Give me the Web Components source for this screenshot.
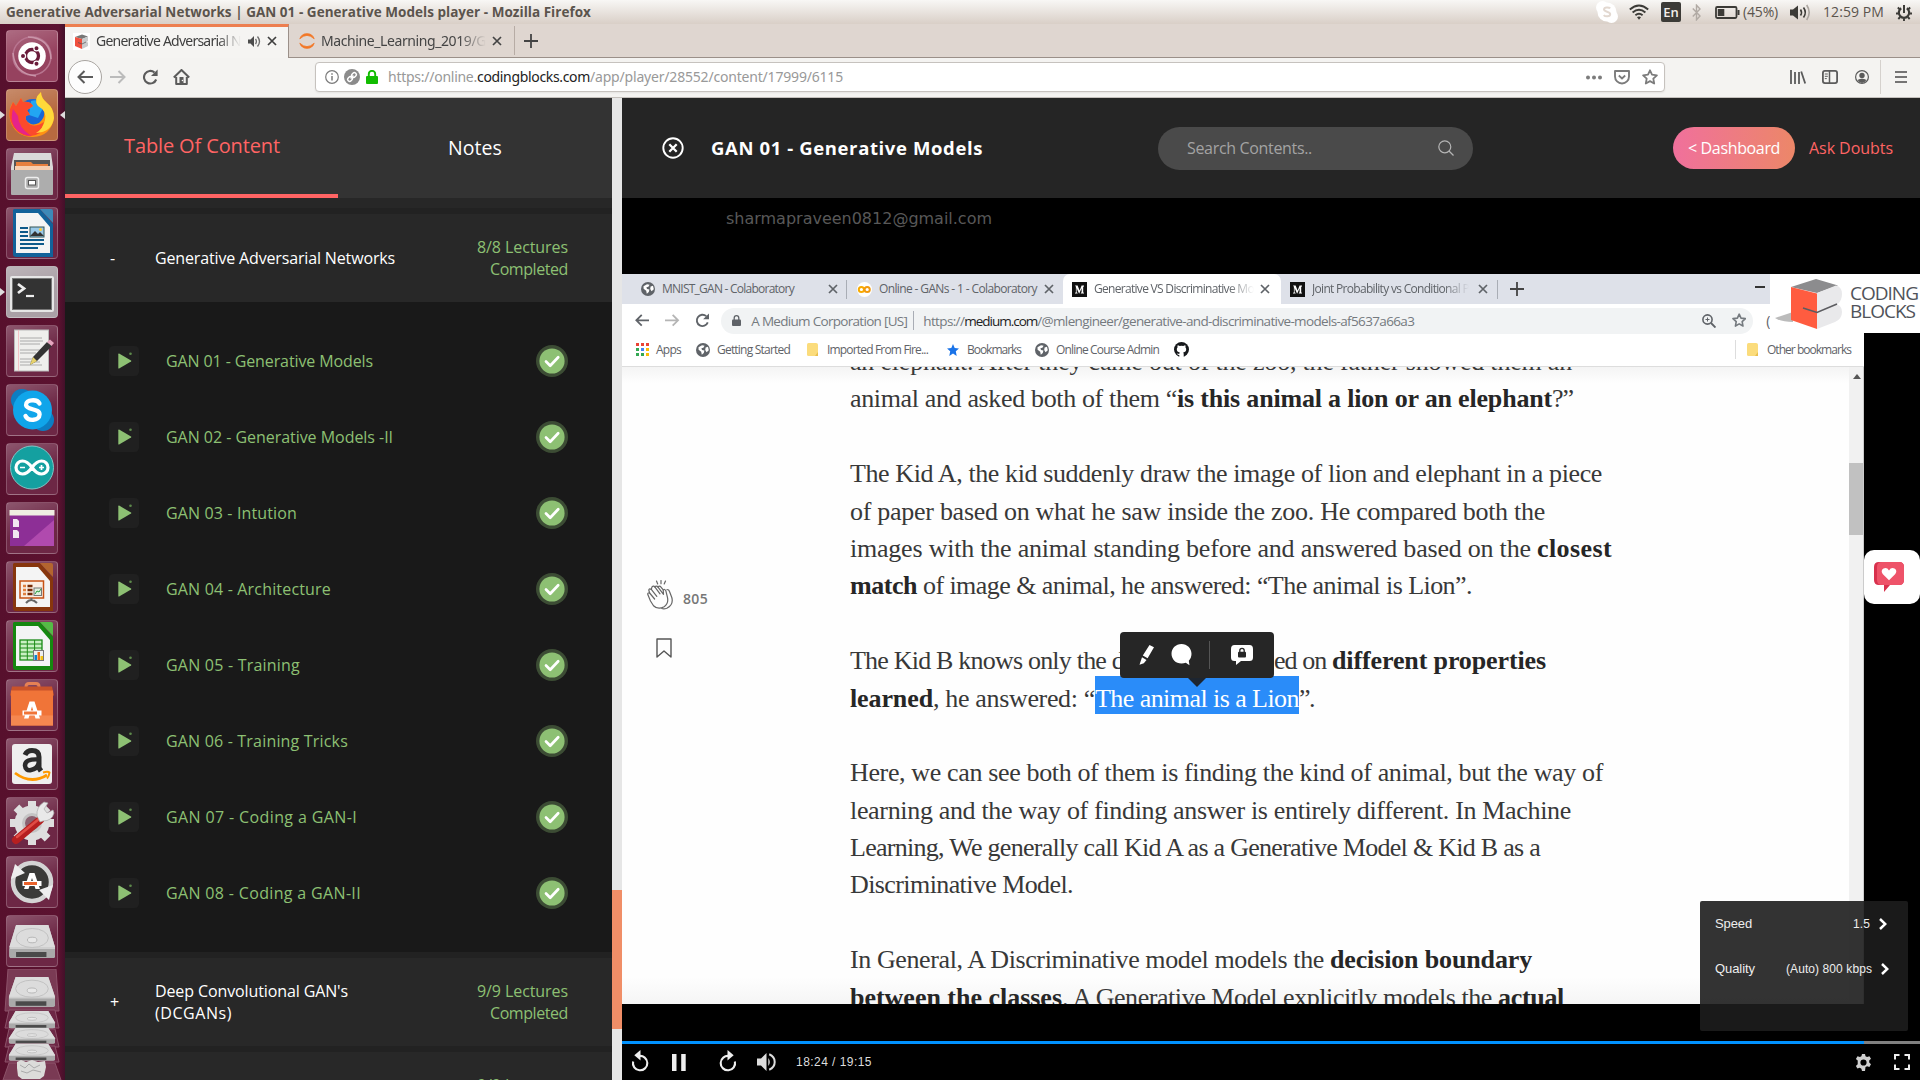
<!DOCTYPE html>
<html lang="en">
<head>
<meta charset="utf-8">
<title>GAN 01 - Generative Models player</title>
<style>
html,body{margin:0;padding:0;background:#000;overflow:hidden}
body{width:1920px;height:1080px;font-family:"Open Sans",sans-serif}
</style>
</head>
<body>
<desktop-shell></desktop-shell>
<script>
const define=(name,html)=>customElements.define(name,class extends HTMLElement{
  constructor(){super();this.attachShadow({mode:'open'}).innerHTML=html;}
});

/* ---------- icon set: name -> [width, height, markup] ---------- */
const globe='<circle cx="7" cy="7" r="7" fill="#5f6368"/><path d="M2.5 4.2 6 2.3l2.6.4-1.2 2-2 .6.6 1.6 2.4.6-.6 2.4-2 1.8-.6-3-2.6-2zM9.6 4.5l2.4-.8.8 3.6-2.2 2-1.4-2.4z" fill="#fff"/>';
const medium='<rect width="15" height="15" fill="#111"/><path d="M3 3.500h2.600l2 5 2-5H12v.8l-.8.6v5.400l.8.6v.7H8.800v-.7l.8-.6V6.200L7.300 11.600H7L4.600 6v4.200l1 .9v.5H3v-.5l.9-.9V4.800z" fill="#fff"/>';
const folder='<path d="M0 1.500Q0 0 1.500 0H9Q11 0 11 1.500V13H1.500Q0 13 0 11.500z" fill="#fbdc7c"/><path d="M11 9v4H8z" fill="#e9bf4f"/>';
const X='<path d="M1 1 9 9M9 1 1 9" stroke="currentColor" stroke-width="1.700" fill="none"/>';
const ICONS={
 skypeTray:[22,22,'<circle cx="11" cy="11" r="9.500" fill="#fff"/><circle cx="6.500" cy="6.500" r="6.500" fill="#fff"/><circle cx="15.500" cy="15.500" r="6.500" fill="#fff"/><path d="M14.200 7.400C13 6 8.200 5.900 8 8.300c-.1 3 6.300 1.800 6.200 4.900-.2 2.700-5 2.600-6.500.9" stroke="#e2d8d0" stroke-width="2" fill="none"/>'],
 wifi:[20,16,'<g fill="none" stroke="#3c3b37" stroke-width="1.900"><path d="M.8 5.500Q10-2.500 19.200 5.500"/><path d="M3.600 8.500Q10 3 16.400 8.500"/><path d="M6.400 11.300Q10 8.400 13.600 11.300"/></g><path d="M8 13.300Q10 11.800 12 13.300L10 15.800z" fill="#3c3b37"/>'],
 bt:[9,17,'<path d="M.8 4.500 8 12 4.500 15.800V1.200L8 5 .8 12.500" fill="none" stroke="#b1aaa4" stroke-width="1.400"/>'],
 battery:[25,13,'<rect x="1" y="1" width="20.500" height="11" rx="1.200" fill="none" stroke="#3c3b37" stroke-width="1.800"/><rect x="2.800" y="3" width="6.500" height="7" fill="#3c3b37"/><path d="M23.500 4v5" stroke="#3c3b37" stroke-width="2"/>'],
 vol:[21,17,'<path d="M0 5.500h3L8 1.500v14L3 11.500H0z" fill="#3c3b37"/><g fill="none" stroke-width="1.600"><path d="M10.500 5.500q2 3 0 6" stroke="#3c3b37"/><path d="M13.500 3.500q3.600 5 0 10" stroke="#3c3b37"/><path d="M16.700 1q5 7.500 0 15" stroke="#aaa49e"/></g>'],
 session:[16,17,'<g fill="none" stroke="#3c3b37"><path d="M5.200 4.300A5.200 5.200 0 1 0 10.800 4.300" stroke-width="2.200"/><path d="M8 1v8" stroke-width="2"/><path d="M1.800 3.500 4 5.500M14.200 3.500 12 5.500M0 9.500h2.600M13.400 9.500H16M2.300 15 4.200 13M13.700 15 11.800 13M8 14.500V17" stroke-width="1.900"/></g>'],
 cube:[17,17,'<rect width="17" height="17" fill="#fff"/><path d="M2 4 9 1.500 15 3.500 9 6z" fill="#777"/><path d="M2 4 9 6v10L2 13z" fill="#f0503f"/><path d="M9 6 15 3.500V8L13.500 9 15 9.500V13L9 16z" fill="#c9cacc"/><path d="M5 9.500 9 11l4-2" stroke="#555" fill="none" stroke-width=".7"/>'],
 tabSound:[14,13,'<path d="M0 4.500h2.500L6 1v11L2.500 8.500H0z" fill="#4c4c4c"/><path d="M7.500 4q1.800 2.500 0 5M9.500 1.500q4 5 0 10" stroke="#6c6c6c" stroke-width="1.300" fill="none"/>'],
 x:[10,10,X],
 jupyter:[16,16,'<path d="M.8 5.800A7.600 7.600 0 0 1 15.200 5.800Q8-1 .8 5.800zM.8 10.200A7.600 7.600 0 0 0 15.200 10.200Q8 17 .8 10.200z" fill="#f37726" stroke="#f37726" stroke-width=".8"/>'],
 plus:[14,14,'<path d="M7 0v14M0 7h14" stroke="currentColor" stroke-width="1.800"/>'],
 back:[16,14,'<path d="M16 7H2M7.500 1 1.500 7l6 6" fill="none" stroke="currentColor" stroke-width="2"/>'],
 fwd:[16,14,'<path d="M0 7h14M8.500 1l6 6-6 6" fill="none" stroke="currentColor" stroke-width="2"/>'],
 reload:[16,16,'<path d="M14.200 10.500A6.300 6.300 0 1 1 12.500 3.500" fill="none" stroke="currentColor" stroke-width="2.100"/><path d="M15.600.5V7H9z" fill="currentColor"/>'],
 home:[17,16,'<path d="M.8 8.500 8.500 1l7.700 7.500M3.200 8V15H13.800V8" fill="none" stroke="currentColor" stroke-width="2" stroke-linejoin="round"/><rect x="6.500" y="8" width="4" height="7" fill="currentColor"/><circle cx="9.400" cy="11.500" r=".7" fill="#fff"/>'],
 info:[14,14,'<circle cx="7" cy="7" r="6.300" fill="none" stroke="#7b7b7b" stroke-width="1.200"/><path d="M7 6v4.500M7 3.200v1.500" stroke="#7b7b7b" stroke-width="1.500"/>'],
 link:[16,16,'<circle cx="8" cy="8" r="8" fill="#8b8b8b"/><g transform="rotate(-45 8 8)" fill="none" stroke="#fff" stroke-width="1.400"><rect x="2.700" y="6" width="5" height="4" rx="2"/><rect x="8.300" y="6" width="5" height="4" rx="2"/><path d="M6 8h4"/></g>'],
 lockg:[12,14,'<path d="M2.800 7V4a3.200 3.200 0 0 1 6.400 0v3" fill="none" stroke="#12bc00" stroke-width="1.900"/><rect y="6" width="12" height="8" rx="1" fill="#12bc00"/>'],
 dots:[16,5,'<g fill="#7c7c7c"><circle cx="2" cy="2.500" r="2"/><circle cx="8" cy="2.500" r="2"/><circle cx="14" cy="2.500" r="2"/></g>'],
 pocket:[16,15,'<path d="M1 1h14v5.500a7 7 0 0 1-14 0z" fill="none" stroke="#7c7c7c" stroke-width="1.900" stroke-linejoin="round"/><path d="M4.800 5.500 8 8.500l3.200-3" fill="none" stroke="#7c7c7c" stroke-width="1.800"/>'],
 star:[16,16,'<path d="M8 1.300 10 5.700l4.900.6-3.600 3.300.9 4.900L8 12.100l-4.200 2.400.9-4.900L1.100 6.300 6 5.700z" fill="none" stroke="currentColor" stroke-width="1.800" stroke-linejoin="round"/>'],
 library:[16,14,'<path d="M1 0v14M5 2v12M9 2v12M11.200 1.500 15.200 13.500" stroke="#5b5b5b" stroke-width="1.800"/>'],
 sidebar:[16,14,'<rect x=".9" y=".9" width="14.200" height="12.200" rx="2" fill="none" stroke="#5b5b5b" stroke-width="1.800"/><path d="M7.500 1v12" stroke="#5b5b5b" stroke-width="1.500"/><path d="M2.800 4h3M2.800 6.300h3M2.800 8.600h2" stroke="#5b5b5b"/>'],
 avatar:[14,14,'<circle cx="7" cy="7" r="6.400" fill="none" stroke="#5b5b5b" stroke-width="1.200"/><circle cx="7" cy="5.500" r="2.700" fill="#5b5b5b"/><path d="M2.500 10Q7 7.500 11.500 10 9.500 13 7 13T2.500 10" fill="#5b5b5b"/>'],
 menu:[12,12,'<path d="M0 1h12M0 6h12M0 11h12" stroke="#4b4b4b" stroke-width="1.700"/>'],
 closeCircle:[22,22,'<circle cx="11" cy="11" r="9.700" fill="none" stroke="#fff" stroke-width="1.900"/><path d="M7.300 7.300l7.400 7.400M14.700 7.300l-7.400 7.400" stroke="#fff" stroke-width="2.300"/>'],
 search:[16,16,'<circle cx="6.800" cy="6.800" r="6" fill="none" stroke="#b5b5b5" stroke-width="1.200"/><path d="M11 11l4.500 4.500" stroke="#b5b5b5" stroke-width="1.300"/>'],
 play:[30,30,'<rect width="30" height="30" rx="4.500" fill="#202020"/><path d="M9.300 8.300v13.600q0 .9.800.5L22 15.600q.7-.5 0-1L10.100 7.600q-.8-.3-.8.7z" fill="#8dc073"/><circle cx="21.500" cy="7.800" r="1.300" fill="#5d8a4b"/>'],
 check:[32,32,'<circle cx="16" cy="16" r="16" fill="#3c4c34"/><circle cx="16" cy="16" r="12.600" fill="#8dc073"/><path d="M10 16.500l4.200 4.200 8-8.400" fill="none" stroke="#fff" stroke-width="2.700" stroke-linecap="round" stroke-linejoin="round"/>'],
 globe:[14,14,globe], medium:[15,15,medium], folder:[11,13,folder],
 colab:[15,15,'<circle cx="7.500" cy="7.500" r="7.500" fill="#fff"/><g fill="none" stroke="#f9ab00" stroke-width="2"><circle cx="4.400" cy="7.500" r="2.600"/><circle cx="10.200" cy="7.500" r="2.600" stroke="#f29a10"/></g>'],
 lock:[9,11,'<path d="M2.200 5V3a2.300 2.300 0 0 1 4.600 0v2" fill="none" stroke="#5f6368" stroke-width="1.300"/><rect y="4.500" width="9" height="6.500" rx="1" fill="#5f6368"/>'],
 zoom:[14,14,'<circle cx="5.500" cy="5.500" r="4.600" fill="none" stroke="#5f6368" stroke-width="1.600"/><path d="M9 9l4.500 4.500" stroke="#5f6368" stroke-width="1.900"/><path d="M5.500 3.500v4M3.500 5.500h4" stroke="#5f6368"/>'],
 apps:[13,13,'<g><path d="M0 0h3v3H0zM5 0h3v3H5zM10 0h3v3h-3z" fill="#ea4335"/><path d="M0 5h3v3H0z" fill="#34a853"/><path d="M5 5h3v3H5z" fill="#4285f4"/><path d="M10 5h3v3h-3z" fill="#fbbc05"/><path d="M0 10h3v3H0zM5 10h3v3H5z" fill="#34a853"/><path d="M10 10h3v3h-3z" fill="#fbbc05"/></g>'],
 bstar:[12,12,'<path d="M6 0 7.700 4 12 4.500 8.800 7.300 9.700 12 6 9.400 2.300 12 3.200 7.300 0 4.500 4.300 4z" fill="#1a73e8"/>'],
 github:[15,15,'<circle cx="7.500" cy="7.500" r="7.500" fill="#16181b"/><path d="M3.700 3.200q1 0 2 .8 1.800-.4 3.600 0 1-.8 2-.8.500 1.100.1 2 .8.900.8 2 0 2.700-3 3.200.500.500.500 1.600V15H5.300v-2.100q-1.800.3-2.500-1.400 1.200 0 2.500.4 0-1 .5-1.500-3-.500-3-3.200 0-1.100.8-2-.4-.9.100-2z" fill="#fff"/>'],
 clap:[27,30,'<g fill="none" stroke="#666" stroke-width="1.200" stroke-linejoin="round" stroke-linecap="round"><path d="M9.500 1l1.200 3M14 .5v3.200M18.500 1l-1.300 3"/><path d="M3.500 21 .8 14.500q-.4-2 1.800-1.500L1.800 10q.6-2 2.500-.6L5 6.800q1.500-1.500 3 .3l.5-.8q1.500-.8 2.500.8l5.500 7.200-.3-4q1.300-1.800 2.600.3l1.600 6.500q1.500 6.500-3.300 9.600-6 3.500-10.600-1z"/><path d="M2.600 13l5 6M4.300 9.400l5.500 7M8 7.100l5 6.700M20 9.500q2 0 2.500 2l2.300 6q2 7-5 10.800-3 1-5 .2M11 7.100q1.500-2 3 0l2 2.600"/></g>'],
 bookmark:[16,20,'<path d="M1 1h14v18l-7-6-7 6z" fill="none" stroke="#555" stroke-width="1.400" stroke-linejoin="round"/>'],
 pen:[15,20,'<path d="M10.500 0 15 2.200 8.600 13.200 3.800 10.500zM3 12.300l4.500 2.600-2.700 3.300-4.300 1.600z" fill="#fff"/>'],
 chat:[21,22,'<path d="M10.500 0c5.600 0 10 4.300 10 9.800 0 3-1 5-2.700 7l.7 4.500-3.700-2.500q-2 .8-4.300.8C4.800 19.600.5 15.300.5 9.800S4.800 0 10.500 0z" fill="#fff"/>'],
 chatlock:[22,20,'<path d="M3.500 0h15Q22 0 22 4v8.500q0 3.500-3.500 3.500H10l-5 4v-4H3.500Q0 16 0 12.500V4Q0 0 3.500 0z" fill="#fff"/><path d="M8.800 7V5.500a2.200 2.200 0 0 1 4.400 0V7" fill="none" stroke="#262626" stroke-width="1.300"/><rect x="7" y="6.800" width="8" height="5.600" rx="1" fill="#262626"/>'],
 chev:[8,12,'<path d="M1 1l5.300 5L1 11" fill="none" stroke="#fff" stroke-width="2.500"/>'],
 replay:[18,22,'<path d="M2.100 11.500A7.200 7.200 0 1 0 8 6" fill="none" stroke="#eee" stroke-width="2.100"/><path d="M9.500 0v10.500L3.300 5.200z" fill="#eee"/>'],
 forward:[18,22,'<path d="M15.900 11.500A7.200 7.200 0 1 1 10 6" fill="none" stroke="#eee" stroke-width="2.100"/><path d="M8.500 0v10.500L14.700 5.200z" fill="#eee"/>'],
 pause:[14,17,'<path d="M0 0h4.500v17H0zM9.200 0h4.500v17H9.200z" fill="#eee"/>'],
 volume:[19,18,'<path d="M0 5.500h4L9.500 0v18L4 12.500H0z" fill="#ddd"/><path d="M11.300 5q3 4 0 8z" fill="#ddd"/><path d="M12.200 1.300q5.500 2.200 5.500 7.700t-5.500 7.700" fill="none" stroke="#ddd" stroke-width="2"/>'],
 gear:[17,17,'<path d="M7 0h3l.5 2.300 1.600.8 2.300-.9 1.600 2.600-1.800 1.600v2.200l1.800 1.600-1.600 2.700-2.300-.7-1.600.9L10 17H7l-.6-2.300-1.600-.9-2.400.8L.9 11.900l1.800-1.600V6.600L.9 5 2.500 2.300l2.400.8 1.500-.8zM8.500 5.400a3.100 3.100 0 1 0 0 6.200 3.100 3.100 0 0 0 0-6.200z" fill="#d0d0d0" fill-rule="evenodd"/>'],
 full:[16,16,'<path d="M1 5.500V1h4.500M10.500 1H15v4.500M15 10.500V15h-4.500M5.500 15H1v-4.500" fill="none" stroke="#eee" stroke-width="2"/>'],
 heart:[30,30,'<path d="M5 0h20q5 0 5 5v13q0 5-5 5H16l-6 7v-7H5q-5 0-5-5V5Q0 0 5 0z" fill="#d8314d"/><path d="M8 0h17q5 0 5 5v13q0 5-5 5H8q-5 0-5-5V5Q3 0 8 0z" fill="#ee5369"/><path d="M15 18.200 8.700 12Q6.300 8.500 9.500 6.500 13 5 15 8.500 17 5 20.500 6.500 23.700 8.500 21.300 12z" fill="#fff"/>'],
 cubeLogo:[68,50,'<path d="M0 39 18 33V43Q6 43 0 39z" fill="#bbb"/><path d="M16 8 41 0 63 6.500 42 14z" fill="#8c8c8e"/><path d="M16 8 42 14.500V50L16 41z" fill="#ff5c40"/><path d="M42 14 61 6.500Q67 8 67 15 67 22 62 25.500 67 27 67 33 67 40 60 43L42 50z" fill="#e9e9eb"/><path d="M28 29l14 4.500L62 25" fill="none" stroke="#5c5c60" stroke-width="1.600"/>']
};
class UiIcon extends HTMLElement{
  connectedCallback(){
    const [w,h,m]=ICONS[this.getAttribute('n')];
    const root=this.shadowRoot||this.attachShadow({mode:'open'});
    root.innerHTML=`<style>:host{display:block;flex:none;width:${w}px;height:${h}px;margin-left:${this.getAttribute('g')||0}px}svg{display:block}</style><svg width="${w}" height="${h}" viewBox="0 0 ${w} ${h}">${m}</svg>`;
  }
}

/* Text set to an exact measure by tracking */
class FitText extends HTMLElement{
  connectedCallback(){
    const w=+this.getAttribute('w');
    const fade=this.hasAttribute('fade')?'-webkit-mask-image:linear-gradient(90deg,#000 84%,transparent)':'';
    const root=this.shadowRoot||this.attachShadow({mode:'open'});
    root.innerHTML=`<style>:host{display:block;flex:none;width:${w}px;margin-left:${this.getAttribute('g')||0}px;white-space:pre;${fade}}span{display:inline-block}</style><span><slot></slot></span>`;
    const s=root.querySelector('span');
    s.style.letterSpacing=((w-s.getBoundingClientRect().width)/this.textContent.length).toFixed(3)+'px';
  }
}

/* ---------- launcher ---------- */
const drive='<path d="M9 0h34l7 22v9q0 2-2 2H4q-2 0-2-2v-9z" fill="#cfcfcf"/><path d="M9 0h34l7 22H2z" fill="#dcdcdc"/><ellipse cx="26" cy="13" rx="17" ry="9.500" fill="none" stroke="#c0c0c0"/><ellipse cx="26" cy="15" rx="5" ry="2.800" fill="#e8e8e8" stroke="#b5b5b5"/><path d="M2 24h48v7q0 2-2 2H4q-2 0-2-2z" fill="#aaa"/><path d="M9 27h32v5H9z" fill="#4a4a4a"/>';
const sheet=(c,d,l)=>`<path d="M8 2h26L47 17v33H10q-3 0-3-3V3z" fill="${c}"/><path d="M34 2h11q2 0 2 2v12z" fill="${l}"/><path d="M10 6h22l12 14v26H10z" fill="#f4f4f4"/>${d}`;
const TILES={
 ubuntu:['#96425f','<circle cx="26" cy="26" r="19" fill="none" stroke="#b87590" stroke-width="1.500"/><path d="M7 23Q9 44 30 46M45 29Q44 8 22 7" fill="none" stroke="#c995a9" stroke-width="1.500"/><circle cx="26" cy="26" r="13.800" fill="#fff"/><circle cx="26" cy="26" r="6.500" fill="none" stroke="#6a1b3a" stroke-width="3.300"/><g fill="#6a1b3a" stroke="#fff" stroke-width="1.200"><circle cx="17" cy="26" r="2.600"/><circle cx="30.500" cy="18.300" r="2.600"/><circle cx="30.500" cy="33.700" r="2.600"/></g>'],
 firefox:['#b76a40','<circle cx="27" cy="25" r="15" fill="#1767d8"/><path d="M25 12q8-3 13 5l-6 12-9-3z" fill="#22a6f2"/><path d="M7 13 10 17 15 9 17 13Q24 12 27 17 23 20 21 21L24 26Q18 26 20 31 25 38 33 34 40 28 38 20 34 17 31 16 29 8 35 3 35 9 41 14 48 21 48 29 45 47 27 48 9 48 4 31 2 20 7 13z" fill="#ff9212"/><path d="M7 13 10 17 15 9 17 13Q24 12 27 17 23 20 21 21L24 26Q18 26 20 31 26 41 38 33L34 44Q23 51 12 43 1 33 4 20z" fill="#fb4a2c"/><path d="M7 20Q3 34 12 42 17 46 25 47 12 38 12 27z" fill="#e5248a"/><path d="M35 3Q27 10 32 17 41 22 39 31 37 40 30 44 46 43 48 29 48 19 41 14 35 9 35 3z" fill="#ffd93a"/>'],
 files:['#6d2745','<path d="M8 5h37l2 14v27H5V19z" fill="#d9d9d9"/><path d="M8 12h36v12H8z" fill="#555"/><path d="M10 14h15l2 2h15v9H10z" fill="#e77f3e"/><path d="M9 18h35v4H9z" fill="#f6ceb0"/><path d="M5 22h42v24q0 1-1 1H6q-1 0-1-1z" fill="#adadad"/><rect x="19.500" y="29.500" width="13" height="11" rx="2" fill="#aaa" stroke="#eee" stroke-width="1.500"/><rect x="22.500" y="32.500" width="7" height="4.500" fill="#fff" stroke="#555"/>'],
 writer:['#6d2745',sheet('#12629a','<path d="M14 21h8M14 25h8M14 29h8M14 33h24M14 37h24M14 41h18" stroke="#0e5a8a" stroke-width="2"/><rect x="24" y="20" width="14" height="10" fill="#9ac9e8" stroke="#355" /><path d="M24 29l5-5 3 3 2-2 4 4z" fill="#333"/><circle cx="34.500" cy="22.500" r="1.500" fill="#fc3"/>','#3d89b8')],
 terminal:['#aaa0a6','<rect x="4" y="10" width="44" height="36" rx="2" fill="#e6e6e6"/><rect x="6.500" y="12.500" width="39" height="31" fill="#333" stroke="#777"/><path d="M12 18l6 4.500-6 4.500" fill="none" stroke="#eee" stroke-width="2.800"/><path d="M20 30h8" stroke="#eee" stroke-width="2.200"/>'],
 text:['#6d2745','<rect x="8.500" y="5" width="34" height="41" fill="#efefed" stroke="#bbb"/><path d="M14 13h22M14 16h23M14 19h20M14 25h22M14 28h16M14 34h12M14 37h20M14 40h22" stroke="#aaa"/><path d="M12.500 5v41" stroke="#f3b7bb" stroke-width=".8"/><path d="M24 40 27 32 41 17 46 21 31 36z" fill="#333"/><path d="M41 17l3-2.500 4 3.500-2.500 3z" fill="#e5a6bf"/><path d="M24 40 27 32 31 36z" fill="#e7d26b"/>'],
 skype:['#6d2745','<circle cx="16" cy="16" r="11" fill="#0c7dc2"/><circle cx="37" cy="36" r="11" fill="#0c7dc2"/><circle cx="26.500" cy="26" r="19.500" fill="#10a5ea"/><path d="M33.500 19.500C31 14.500 19.500 15.500 20 21c.6 5.500 13.600 3 13.600 9.500C33.500 37 22 37.500 19.500 32" fill="none" stroke="#fff" stroke-width="4.300" stroke-linecap="round"/>'],
 arduino:['#6d2745','<g transform="translate(0 -1)"><circle cx="26" cy="25.500" r="21.500" fill="#14a0a0" stroke="#7fc6c6"/><path d="M26 25.500C22 20 18.800 19 16.500 19a6.500 6.500 0 0 0 0 13c2.300 0 5.500-1 9.500-6.500 4-5.500 7.200-6.500 9.500-6.500a6.500 6.500 0 0 1 0 13c-2.300 0-5.500-1-9.500-6.500z" fill="none" stroke="#fff" stroke-width="3.200"/><path d="M14 25.500h5M33 25.500h5M35.500 23v5" stroke="#fff" stroke-width="1.700"/></g>'],
 work:['#6d2745','<g transform="translate(0 -2)"><rect x="4" y="10" width="44" height="36" fill="#8d2f96"/><path d="M18 46 48 20v26z" fill="#b04aae"/><rect x="3.500" y="10" width="45" height="5.500" fill="#efeee2"/><path d="M7 19h4l2 2v6H7zM7 30h4l2 2v6H7z" fill="#f1e6f1"/></g>'],
 impress:['#6d2745',sheet('#87360d','<rect x="14" y="20" width="23.500" height="17" fill="#fbeee4" stroke="#c65214" stroke-width="1.500"/><path d="M17 25h3M17 29h3M17 33h3" stroke="#e08040" stroke-width="2.400"/><path d="M21.500 25h5M21.500 29h5M21.500 33h5" stroke="#762c08" stroke-width="2.400"/><rect x="28" y="27" width="7.500" height="7.500" fill="#dff0df" stroke="#777"/><path d="M29 33l2-3 2 1 2-3" stroke="#2a9a3c" fill="none"/><path d="M25.500 37v2M20 42q5-6 11 0" stroke="#666" stroke-width="2" fill="none"/>','#b4652f')],
 calc:['#6d2745',sheet('#15880f','<rect x="14" y="20" width="22" height="20" fill="#c9f0c4" stroke="#1b8a17" stroke-width="1.300"/><path d="M14 24h22M14 28h22M14 32h22M14 36h22M21.300 20v20M28.600 20v20" stroke="#1b8a17"/><rect x="27.500" y="30.500" width="10" height="10" fill="#eee" stroke="#777"/><path d="M28.500 35h2.500v5h-2.500z" fill="#0a84cf"/><path d="M31.500 32h2.500v8h-2.500z" fill="#e8691c"/><path d="M34.500 36H37v4h-2.500z" fill="#f5c211"/>','#55bb46')],
 software:['#6d2745','<g transform="translate(0 .5)"><path d="M20 13V7q0-3 3-3h7q3 0 3 3v6" fill="none" stroke="#e58155" stroke-width="3"/><path d="M6 7h40l2 9H4z" fill="#c9532a"/><path d="M5 11h42v35H5z" fill="#f07438"/><path d="M5 36h42v10H5z" fill="#f58750"/><path d="M18 39 23.500 22h5L34 39h-4.500L26 27 22.500 39z" fill="#fff"/><path d="M16.500 31h19v5h-19z" fill="#fff"/><path d="M18 32h13v3H18z" fill="#f07438"/></g>'],
 amazon:['#6d2745','<rect x="6" y="6" width="40" height="40" rx="3" fill="#efefef"/><path d="M19 17Q21 12.500 26 12.500 33 12.500 33 19V30l2 3" fill="none" stroke="#2b2b2b" stroke-width="5"/><path d="M33 21.500Q19 20.500 19 27.500 19.500 33 25 32 31 31 33 25" fill="none" stroke="#2b2b2b" stroke-width="4.500"/><path d="M9 35q16 12 32 2" fill="none" stroke="#f90" stroke-width="2.800"/><path d="M37 34.500q5-1.500 6.500 0-.5 4-2.500 6" fill="none" stroke="#f90" stroke-width="2"/>'],
 settings:['#6d2745','<g fill="#dedede"><circle cx="26" cy="26" r="17.500"/><path d="M22 4h8v44h-8zM4 22h44v8H4z"/><path d="M22 4h8v44h-8zM4 22h44v8H4z" transform="rotate(45 26 26)"/></g><circle cx="26" cy="26" r="10" fill="#c4c4c4"/><circle cx="26" cy="26" r="7" fill="#8a6170"/><path d="M34 23 10 43" stroke="#b61f20" stroke-width="8" stroke-linecap="round"/><path d="M33 22 11 40" stroke="#e04c45" stroke-width="2.500" stroke-linecap="round"/><path d="M31 19q-1-9 7-14l4 1-4 6 3 4 6-3 1 3q-2 8-11 8l-3 1z" fill="#e9e9e9" stroke="#aaa" stroke-width=".7"/>'],
 updater:['#6d2745','<circle cx="26" cy="26" r="19" fill="#3a3a38" stroke="#d4d4d4" stroke-width="4.500"/><path d="M5 23 9 8l10 9zM47 29 43 44 33 34z" fill="#eee"/><path d="M18 33 23.500 17h5L34 33h-4.500L26 22 22.500 33z" fill="#fff"/><path d="M16.500 25h19v5h-19z" fill="#fff"/><path d="M18 26h13v3H18z" fill="#e9622b"/>'],
 drive:['#6d2745','<g transform="translate(1.500 10) scale(.95 1)">'+drive+'</g>']
};
class DockTile extends HTMLElement{
  connectedCallback(){
    const [c,m]=TILES[this.getAttribute('kind')];
    const arrows=this.getAttribute('run')||'';
    this.attachShadow({mode:'open'}).innerHTML=`<style>:host{display:flex;align-items:center;width:65px;height:52px;flex:none}
    .b{width:50px;height:50px;border-radius:4px;border:1px solid rgba(255,255,255,.2);background:linear-gradient(160deg,rgba(255,255,255,.22),rgba(255,255,255,0) 55%),${c};display:flex;align-items:center;justify-content:center}
    i{width:0;height:0;border:4.500px solid transparent;border-right:0;margin-right:1px;border-left:5px solid ${arrows.includes('l')?'#ddd':'transparent'}}
    i+.b+i{border-right:5px solid ${arrows.includes('r')?'#ddd':'transparent'};border-left:0;margin:0 0 0 2px}svg{flex:none}</style>
    <i></i><div class="b"><svg width="52" height="52" viewBox="0 0 52 52">${m}</svg></div><i></i>`;
  }
}
define('dock-stack',`<style>:host{display:block;height:111px;flex:none;margin-top:-5px}svg{display:block}</style>
<svg width="65" height="111" viewBox="0 0 65 111">
<path d="M8 0h48l3 42H5z" fill="#7a3a54" stroke="#8d536a"/><g transform="translate(7 8) scale(.96 .9)">${drive}</g>
<path d="M9 41h46l4 18H5z" fill="#6d2745" stroke="#8d536a"/><g transform="translate(7 42) scale(.96 .52)">${drive}</g>
<path d="M9 60h46l4 18H5z" fill="#6d2745" stroke="#8d536a"/><g transform="translate(7 59) scale(.96 .47)">${drive}</g>
<path d="M9 77h46l4 16H5z" fill="#6d2745" stroke="#8d536a"/><g transform="translate(7 75) scale(.96 .5)">${drive}</g>
<path d="M9 94h46l6 17H3z" fill="#7a3a54" stroke="#8d536a"/><path d="M17 93l4-2 5 2 6-2 6 2 7-1 1 6-2 9-4 3H22l-4-3-1-8z" fill="#dcdcda"/><path d="M20 96l5 3 4-4 5 4 6-3M21 102l6 2 6-3 8 2" stroke="#aaa" fill="none"/></svg>`);
define('app-dock',`<style>:host{display:flex;flex-direction:column;gap:7px;width:65px;box-sizing:border-box;padding-top:6px;height:1056px;overflow:hidden;background:linear-gradient(90deg,#57102d,#5c1230 90%,#43102a)}</style>
<dock-tile kind="ubuntu"></dock-tile><dock-tile kind="firefox" run="lr"></dock-tile><dock-tile kind="files"></dock-tile><dock-tile kind="writer"></dock-tile><dock-tile kind="terminal" run="l"></dock-tile><dock-tile kind="text"></dock-tile><dock-tile kind="skype"></dock-tile><dock-tile kind="arduino"></dock-tile><dock-tile kind="work"></dock-tile><dock-tile kind="impress"></dock-tile><dock-tile kind="calc"></dock-tile><dock-tile kind="software"></dock-tile><dock-tile kind="amazon"></dock-tile><dock-tile kind="settings"></dock-tile><dock-tile kind="updater"></dock-tile><dock-tile kind="drive"></dock-tile><dock-stack></dock-stack>`);

/* ---------- system bar ---------- */
define('system-bar',`<style>:host{display:flex;align-items:center;height:24px;box-sizing:border-box;padding:0 8px 0 6px;background:linear-gradient(#f8f7f5,#d9cfc7);color:#5b544d;font:14px/24px "Open Sans",sans-serif}
.sp{flex:1}.en{width:20px;height:20px;background:#3c3b37;border-radius:2px;margin-left:12px;color:#f3efeb;font:600 13px/20px "Open Sans";text-align:center}</style>
<fit-text w="585" style="font-weight:700;font-size:13.500px">Generative Adversarial Networks | GAN 01 - Generative Models player - Mozilla Firefox</fit-text>
<div class="sp"></div>
<ui-icon n="skypeTray"></ui-icon><ui-icon n="wifi" g="11"></ui-icon><div class="en">En</div><ui-icon n="bt" g="11"></ui-icon><ui-icon n="battery" g="14"></ui-icon><fit-text w="35" g="3">(45%)</fit-text><ui-icon n="vol" g="12"></ui-icon><fit-text w="61" g="12">12:59 PM</fit-text><ui-icon n="session" g="12"></ui-icon>`);

/* ---------- Firefox chrome ---------- */
define('firefox-chrome',`<style>:host{display:block;height:74px;font:14px/20px "Noto Sans",sans-serif;color:#444}
.tabs{display:flex;height:34px;background:#dfd6d0;box-sizing:border-box;border-bottom:1px solid #9b9089}
.t{display:flex;align-items:center;height:33px;flex:none}
.a{width:224px;height:34px;background:#f5f4f2;border-top:3px solid #ed7e4f;border-right:1px solid #9b9089;box-sizing:border-box;padding:0 0 3px 8px;color:#3f3f3f}
.bar{display:flex;align-items:center;height:40px;box-sizing:border-box;background:#f4f3f1;border-bottom:1px solid #c4c0bc;color:#5b5b5b;padding:0 0 1px 3px}
.bk{width:32px;height:32px;border:1px solid #a9a5a1;border-radius:50%;background:#fdfdfd;display:flex;align-items:center;justify-content:center;flex:none}
.url{display:flex;align-items:center;width:1348px;height:28px;border:1px solid #c6c2be;border-radius:4px;background:#fff;margin-left:124px;color:#999;box-shadow:0 1px 2px #0001}
.s{width:1px;background:#b7aca5;flex:none}</style>
<div class="tabs"><div class="t a"><ui-icon n="cube"></ui-icon><fit-text fade w="145" g="6">Generative Adversarial N</fit-text><ui-icon n="tabSound" g="7"></ui-icon><ui-icon n="x" g="5"></ui-icon></div>
<div class="t"><ui-icon n="jupyter" g="10"></ui-icon><fit-text fade w="165" g="6">Machine_Learning_2019/G</fit-text><ui-icon n="x" g="6"></ui-icon><div class="s" style="height:29px;margin-left:12px"></div><ui-icon n="plus" g="9"></ui-icon></div></div>
<div class="bar"><div class="bk"><ui-icon n="back"></ui-icon></div><ui-icon n="fwd" g="8" style="color:#bbb"></ui-icon><ui-icon n="reload" g="16"></ui-icon><ui-icon n="home" g="15"></ui-icon>
<div class="url" style="margin-left:125px"><ui-icon n="info" g="9"></ui-icon><ui-icon n="link" g="5"></ui-icon><ui-icon n="lockg" g="6"></ui-icon><fit-text w="89" g="10">https://online.</fit-text><fit-text w="113" style="color:#222">codingblocks.com</fit-text><fit-text w="253">/app/player/28552/content/17999/6115</fit-text><ui-icon n="dots" g="743"></ui-icon><ui-icon n="pocket" g="12"></ui-icon><ui-icon n="star" g="12" style="color:#7c7c7c"></ui-icon></div>
<ui-icon n="library" g="125"></ui-icon><ui-icon n="sidebar" g="16"></ui-icon><ui-icon n="avatar" g="17"></ui-icon><div class="s" style="height:34px;margin-left:11px;background:#d5d1cd"></div><ui-icon n="menu" g="14"></ui-icon></div>`);

/* ---------- course sidebar ---------- */
define('lecture-row',`<style>:host{display:flex;align-items:center;height:76px;box-sizing:border-box;padding-left:44px;width:503px;color:#8dc073}.t{width:370px;padding-left:27px;margin-top:-1px}</style>
<ui-icon n="play"></ui-icon><div class="t"><slot></slot></div><ui-icon n="check"></ui-icon>`);
define('section-head',`<style>:host{display:flex;align-items:center;width:547px;height:88px;background:#282828;border-top:6px solid #222;flex:none;color:#fff;line-height:22px}
:host>div{margin-top:-1px}.m{width:45px;padding-left:45px}.t{width:322px}.r{color:#8dc073;width:91px;display:flex;flex-direction:column;align-items:flex-end}</style>
<div class="m"><slot name="mark"></slot></div><div class="t"><slot></slot></div><div class="r"><slot name="count"></slot></div>`);
define('course-sidebar',`<style>:host{display:flex;height:982px;width:557px;font:16px/22px "Open Sans",sans-serif;overflow:hidden}
.c{width:547px;background:#272727;overflow:hidden}.tabs{display:flex;height:100px;background:#333}
.on{width:273px;height:96px;border-bottom:4px solid #ff6464;color:#ff6464;display:flex;align-items:center;font-size:20px}
.off{width:274px;height:100px;color:#fff;display:flex;align-items:center;font-size:19.500px}
.list{background:#191919;height:650px;box-sizing:border-box;padding-top:21px}
.track{width:10px;background:#e6e6e6;padding-top:792px;box-sizing:border-box}.thumb{height:139px;background:#f08e67}
.g{height:10px}section-head{font-weight:500}.n{font-weight:400}</style>
<div class="c"><div class="tabs"><div class="on"><fit-text w="156" g="59">Table Of Content</fit-text></div><div class="off"><fit-text w="54" g="110">Notes</fit-text></div></div><div class="g"></div>
<section-head><fit-text slot="mark" w="5">-</fit-text><fit-text w="240">Generative Adversarial Networks</fit-text><fit-text class="n" slot="count" w="91">8/8 Lectures</fit-text><fit-text class="n" slot="count" w="78">Completed</fit-text></section-head>
<div class="list">
<lecture-row><fit-text w="207">GAN 01 - Generative Models</fit-text></lecture-row>
<lecture-row><fit-text w="227">GAN 02 - Generative Models -II</fit-text></lecture-row>
<lecture-row><fit-text w="131">GAN 03 - Intution</fit-text></lecture-row>
<lecture-row><fit-text w="165">GAN 04 - Architecture</fit-text></lecture-row>
<lecture-row><fit-text w="134">GAN 05 - Training</fit-text></lecture-row>
<lecture-row><fit-text w="182">GAN 06 - Training Tricks</fit-text></lecture-row>
<lecture-row><fit-text w="191">GAN 07 - Coding a GAN-I</fit-text></lecture-row>
<lecture-row><fit-text w="195">GAN 08 - Coding a GAN-II</fit-text></lecture-row>
</div>
<section-head><fit-text class="n" slot="mark" w="9">+</fit-text><fit-text w="193">Deep Convolutional GAN's</fit-text><fit-text w="77">(DCGANs)</fit-text><fit-text class="n" slot="count" w="91">9/9 Lectures</fit-text><fit-text class="n" slot="count" w="78">Completed</fit-text></section-head>
<section-head><fit-text class="n" slot="count" w="91">9/9 Lectures</fit-text><fit-text class="n" slot="count" w="78">&nbsp;</fit-text></section-head>
</div><div class="track"><div class="thumb"></div></div>`);

/* ---------- player header ---------- */
define('player-header',`<style>:host{display:flex;align-items:center;height:100px;background:#252525;color:#fff;font:16px/22px "Open Sans",sans-serif;padding-left:40px}
.p{display:flex;align-items:center;width:315px;height:43px;border-radius:22px;background:#4a4a4a;margin-left:175px;color:#a3a3a3}
.d{display:flex;align-items:center;width:122px;height:42px;border-radius:21px;background:linear-gradient(90deg,#f0709c,#ec8768);margin-left:200px}</style>
<ui-icon n="closeCircle"></ui-icon><fit-text w="272" g="27" style="font-weight:700;font-size:18.500px">GAN 01 - Generative Models</fit-text>
<div class="p"><fit-text w="125" g="29">Search Contents..</fit-text><ui-icon n="search" g="126"></ui-icon></div>
<div class="d"><fit-text w="92" g="15">&lt; Dashboard</fit-text></div><fit-text w="84" g="14" style="color:#ff6464">Ask Doubts</fit-text>`);

/* ---------- recorded Chrome window ---------- */
define('chrome-recording',`<style>:host{display:block;width:1242px;height:730px;background:#fefefe;font:12px/16px "Open Sans",sans-serif;color:#5f6368;overflow:hidden}
.tabs{display:flex;align-items:center;height:30px;background:#dee1e9}.tabs>*{flex:none}
.on{display:flex;align-items:center;width:218px;height:30px;background:#fff;border-radius:7px 7px 0 0;margin-left:9px}
.s{width:1px;height:19px;background:#a9adb5}
.bar{display:flex;align-items:center;height:34px;background:#fff;padding-bottom:1px;box-sizing:border-box}
.o{display:flex;align-items:center;width:1032px;height:26px;border-radius:13px;background:#f1f3f4;margin-left:12px;font-size:13.500px;color:#757a7f}
.bm{display:flex;align-items:center;height:29px;border-bottom:1px solid #ddd;background:#fff;padding-bottom:5px;box-sizing:border-box}
</style>
<div class="tabs"><ui-icon n="globe" g="19"></ui-icon><fit-text w="132" g="7">MNIST_GAN - Colaboratory</fit-text><ui-icon n="x" g="34"></ui-icon><div class="s" style="margin-left:8px"></div><ui-icon n="colab" g="10"></ui-icon><fit-text w="158" g="7">Online - GANs - 1 - Colaboratory</fit-text><ui-icon n="x" g="7"></ui-icon>
<div class="on"><ui-icon n="medium" g="9"></ui-icon><fit-text fade w="160" g="7">Generative VS Discriminative Mo</fit-text><ui-icon n="x" g="6"></ui-icon></div>
<ui-icon n="medium" g="9"></ui-icon><fit-text fade w="157" g="7">Joint Probability vs Conditional P</fit-text><ui-icon n="x" g="9"></ui-icon><div class="s" style="margin-left:9px"></div><ui-icon n="plus" g="12" style="color:#444"></ui-icon><div style="width:10px;height:2px;background:#333;margin:0 0 4px 231px"></div></div>
<div class="bar"><ui-icon n="back" g="14" style="zoom:.9"></ui-icon><ui-icon n="fwd" g="18" style="zoom:.9;color:#b5b5b5"></ui-icon><ui-icon n="reload" g="17" style="zoom:.9"></ui-icon>
<div class="o"><ui-icon n="lock" g="11"></ui-icon><fit-text w="156" g="10">A Medium Corporation [US]</fit-text><div class="s" style="margin-left:6px"></div><fit-text w="41" g="9">https://</fit-text><fit-text w="73" style="color:#222">medium.com</fit-text><fit-text w="377">/@mlengineer/generative-and-discriminative-models-af5637a66a3</fit-text><ui-icon n="zoom" g="288"></ui-icon><ui-icon n="star" g="17" style="zoom:.9"></ui-icon></div><fit-text w="5" g="13" style="font-size:14px">(</fit-text></div>
<div class="bm"><ui-icon n="apps" g="14"></ui-icon><fit-text w="25" g="7">Apps</fit-text><ui-icon n="globe" g="15"></ui-icon><fit-text w="73" g="7">Getting Started</fit-text><ui-icon n="folder" g="17"></ui-icon><fit-text w="101" g="9">Imported From Fire...</fit-text><ui-icon n="bstar" g="19"></ui-icon><fit-text w="54" g="8">Bookmarks</fit-text><ui-icon n="globe" g="14"></ui-icon><fit-text w="103" g="7">Online Course Admin</fit-text><ui-icon n="github" g="15"></ui-icon><div class="s" style="margin-left:546px;background:#ddd"></div><ui-icon n="folder" g="11"></ui-icon><fit-text w="84" g="9">Other bookmarks</fit-text></div>
<medium-article></medium-article>`);
define('medium-article',`<style>:host{display:flex;height:637px;overflow:hidden;background:linear-gradient(#f4f4f4,#fefefe 16px,#fefefe 610px,#f5f5f5);font:26px/37.400px "Liberation Serif",serif;color:#383838}
.side{width:228px;box-sizing:border-box;padding:213px 0 0 25px;font:600 14px/18px "Open Sans",sans-serif;color:#777}
.r{display:flex;align-items:center}.art{width:999px;margin-top:-24px}.l{display:flex;height:37.400px}.b{font-weight:700;color:#262626}
.p{margin-bottom:37.400px}.sel{background:#2a8cf9;color:#fff;margin-top:-4px;padding-top:4px;height:34px}
.sb{width:14px;background:#f1f1f1;border-right:1px solid #ccc}.up{width:0;margin:7px 0 84px 4px;border:4px solid transparent;border-top:0;border-bottom:5px solid #555}.th{height:72px;background:#c1c1c1}</style>
<div class="side"><div class="r"><ui-icon n="clap"></ui-icon><fit-text w="25" g="9" style="padding-top:7px">805</fit-text></div><ui-icon n="bookmark" g="9" style="margin-top:28px"></ui-icon></div>
<div class="art">
<div class="p"><div class="l"><fit-text w="722">an elephant. After they came out of the zoo, the father showed them an</fit-text></div>
<div class="l"><fit-text w="327">animal and asked both of them “</fit-text><fit-text w="375" class="b">is this animal a lion or an elephant</fit-text><fit-text w="21">?”</fit-text></div></div>
<div class="p"><div class="l"><fit-text w="752">The Kid A, the kid suddenly draw the image of lion and elephant in a piece</fit-text></div>
<div class="l"><fit-text w="695">of paper based on what he saw inside the zoo. He compared both the</fit-text></div>
<div class="l"><fit-text w="687">images with the animal standing before and answered based on the </fit-text><fit-text w="75" class="b">closest</fit-text></div>
<div class="l"><fit-text w="67" class="b">match</fit-text><fit-text w="555"> of image &amp; animal, he answered: “The animal is Lion”.</fit-text></div></div>
<div class="p"><div class="l"><fit-text w="274">The Kid B knows only the d</fit-text><fit-text w="58" g="150">ed on </fit-text><fit-text w="214" class="b">different properties</fit-text></div>
<div class="l"><fit-text w="83" class="b">learned</fit-text><fit-text w="162">, he answered: “</fit-text><fit-text w="204" class="sel">The animal is a Lion</fit-text><fit-text w="15">”.</fit-text></div></div>
<div class="p"><div class="l"><fit-text w="753">Here, we can see both of them is finding the kind of animal, but the way of</fit-text></div>
<div class="l"><fit-text w="721">learning and the way of finding answer is entirely different. In Machine</fit-text></div>
<div class="l"><fit-text w="690">Learning, We generally call Kid A as a Generative Model &amp; Kid B as a</fit-text></div>
<div class="l"><fit-text w="223">Discriminative Model.</fit-text></div></div>
<div class="p"><div class="l"><fit-text w="480">In General, A Discriminative model models the </fit-text><fit-text w="202" class="b">decision boundary</fit-text></div>
<div class="l"><fit-text w="212" class="b">between the classes</fit-text><fit-text w="436">. A Generative Model explicitly models the </fit-text><fit-text w="66" class="b">actual</fit-text></div></div>
</div>
<div class="sb"><div class="up"></div><div class="th"></div></div>`);

define('highlight-menu',`<style>:host{position:absolute;left:498px;top:534px;width:154px;height:46px;background:#262626;border-radius:4px;display:flex;align-items:center}
.s{width:1px;height:28px;background:#555;margin-left:17px}:host::after{content:"";position:absolute;left:68px;top:46px;border:9px solid transparent;border-bottom:0;border-top-color:#1d2530}</style>
<ui-icon n="pen" g="19"></ui-icon><ui-icon n="chat" g="17"></ui-icon><div class="s"></div><ui-icon n="chatlock" g="21"></ui-icon>`);
define('brand-watermark',`<style>:host{position:absolute;left:1148px;top:176px;width:150px;height:59px;background:#fff;display:flex;align-items:center;overflow:hidden;font:19px/17.500px "Open Sans",sans-serif;color:#50535a}</style>
<ui-icon n="cubeLogo" g="5" style="margin-top:1px"></ui-icon><div style="margin:-2px 0 0 7px"><fit-text w="68">CODING</fit-text><fit-text w="65">BLOCKS</fit-text></div>`);
define('feedback-tab',`<style>:host{position:absolute;left:1242px;top:452px;width:56px;height:54px;border-radius:10px;background:#fff;display:flex;align-items:center}</style><ui-icon n="heart" g="10"></ui-icon>`);
define('settings-panel',`<style>:host{position:absolute;left:1078px;top:803px;width:208px;height:130px;box-sizing:border-box;border-radius:2px;background:rgba(29,29,29,.902);color:#eee;font:13px/20px "Liberation Sans",sans-serif;padding-top:13px}
.r{display:flex;align-items:center;height:20px;margin-bottom:25px}</style>
<div class="r"><fit-text w="37" g="15">Speed</fit-text><fit-text w="17" g="101" style="font-size:12px">1.5</fit-text><ui-icon n="chev" g="9"></ui-icon></div>
<div class="r"><fit-text w="40" g="15">Quality</fit-text><fit-text w="86" g="31" style="font-size:12px">(Auto) 800 kbps</fit-text><ui-icon n="chev" g="9"></ui-icon></div>`);
define('video-controls',`<style>:host{display:block;font:12px/16px "Liberation Sans",sans-serif;color:#ddd}.pr{height:3px;background:#808080}.pr div{width:1242px;height:3px;background:#0092ff}
.c{display:flex;align-items:center;height:36px;padding-left:9px}</style>
<div class="pr"><div></div></div><div class="c"><ui-icon n="replay" style="margin-top:-3px"></ui-icon><ui-icon n="pause" g="23"></ui-icon><ui-icon n="forward" g="33" style="margin-top:-3px"></ui-icon><ui-icon n="volume" g="20"></ui-icon><fit-text w="76" g="20">18:24 / 19:15</fit-text><ui-icon n="gear" g="983"></ui-icon><ui-icon n="full" g="22"></ui-icon></div>`);

define('video-stage',`<style>:host{display:block;height:882px;background:#000}.e{display:flex;height:76px;font:16px/42px "DejaVu Sans",sans-serif;color:#585858}.gap{height:37px}</style>
<div class="e"><fit-text w="266" g="104">sharmapraveen0812@gmail.com</fit-text></div><chrome-recording></chrome-recording><div class="gap"></div><video-controls></video-controls>`);
define('course-player',`<style>:host{display:block;position:relative;width:1298px;height:982px;overflow:hidden}</style>
<player-header></player-header><video-stage></video-stage><highlight-menu></highlight-menu><brand-watermark></brand-watermark><feedback-tab></feedback-tab><settings-panel></settings-panel>`);

define('desktop-shell',`<style>:host{display:flex;flex-direction:column;width:1920px;height:1080px;overflow:hidden}.row{display:flex}.w{width:1855px}</style>
<system-bar></system-bar><div class="row"><app-dock></app-dock><div class="w"><firefox-chrome></firefox-chrome><div class="row"><course-sidebar></course-sidebar><course-player></course-player></div></div></div>`);
customElements.define('dock-tile',DockTile);
customElements.define('ui-icon',UiIcon);
customElements.define('fit-text',FitText);
</script>
</body>
</html>
